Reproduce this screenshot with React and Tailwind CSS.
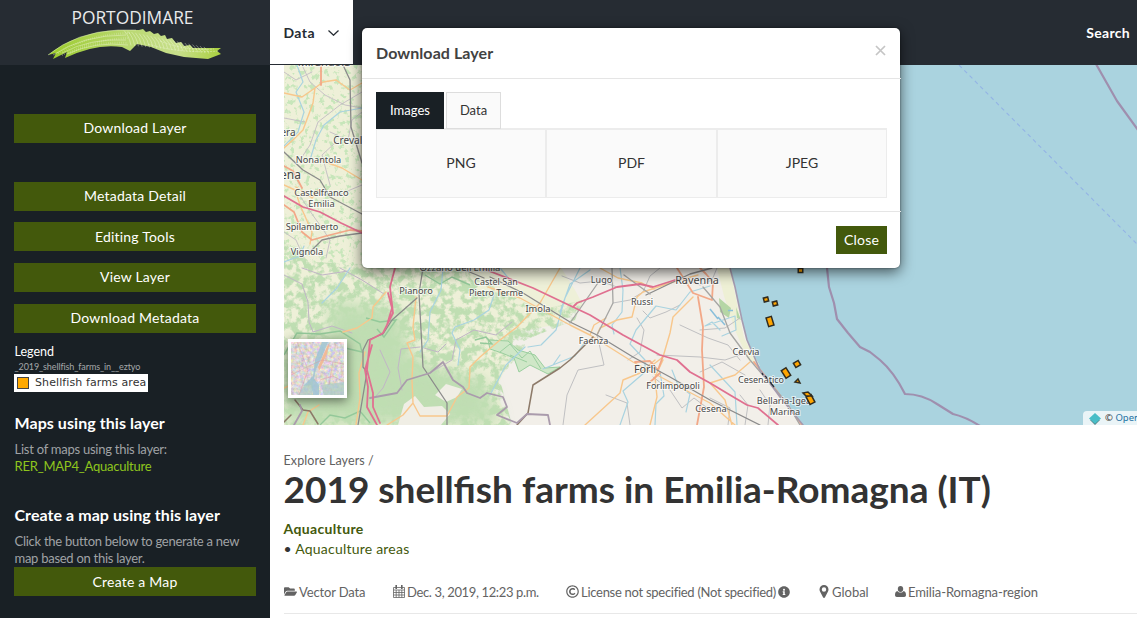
import React from "react";
import { FaFolderOpen, FaRegCopyright, FaInfoCircle, FaUser } from "react-icons/fa";

const roads = [
  // minor roads and administrative lines
  ["#c3bcc4", 0.9, "M302 65L310 82L325 95L345 105L362 108M284 118L305 122M362 92L340 105L318 122L310 145L300 160M284 72L296 80L312 72M330 132L348 140L352 120L362 112M336 142L322 155L326 170L330 185M284 232L296 240L304 258M362 185L350 190L338 196L318 194M300 196L312 214L322 228L330 240L326 258"],
  ["#c1b6c6", 1, "M284 275L302 284L308 302L309 322L313 332L332 326L352 333M340 268L362 280L384 294M302 268L322 275L348 271M420 347L401 349L398 368L402 390M380 350L390 372L383 388L376 396M424 348L438 352L446 344M430 373L452 360L456 340L474 330L496 335L512 322"],
  ["#c0c0c2", 1, "M617 287L600 281L580 283L562 276M613 303L630 300L643 292M660 268L650 276L643 292M643 311L650 318L666 312L680 305M637 318L644 330L640 352L628 360M657 355L700 357L725 360L748 352M597 335L604 365L578 370L567 395L563 425M653 377L670 390L682 408L694 398L710 410M606 395L627 403L630 425M700 330L725 328L740 318M680 325L708 338L728 345L740 360M700 372L722 362L745 375M717 268L712 280L700 285L680 278M710 398L730 408L728 425M740 395L748 405L745 425M760 390L770 405L768 425"],
  // rivers
  ["#a9d3e0", 1.2, "M297 65L303 82L296 92L304 112L298 132L284 146M362 108L340 112L324 125L316 140L310 160M284 262L300 256L304 246M350 268L337 288L322 303M443 268L441 290L430 312L428 340L420 352M494 295L489 310L474 320L455 327L452 333L460 350L458 365M580 268L565 298L556 330L541 345L528 347M490 395L506 365L525 347M510 280L500 268M560 355L553 365L543 369L575 356L585 342M620 268L623 290L622 312L612 325L614 334M710 286L690 292L676 310L656 306L636 330L630 344L645 360L645 372L623 391L628 402L620 425M660 372L664 396L656 404L655 425M720 330L712 322L705 326L735 316L736 330L722 336M672 370L678 385L690 394L686 412M710 365L735 392L737 425M590 270L570 284L560 312"],
  // secondary roads
  ["#f8c78c", 1.4, "M284 93L302 97L315 88L323 82L336 80L350 90L362 83M315 88L313 103L303 130L293 140L284 148M320 160L342 168L362 180M284 185L295 190L300 205L312 232L310 244M296 187L312 198L318 190"],
  ["#f8c78c", 1.4, "M416 297L413 327L415 340L407 343L413 357L412 380L413 403L403 415L387 425M413 403L420 416L447 416L457 397L469 388L470 367L480 357L500 340L517 327L540 303L560 268M386 292L373 307L372 318L357 328L343 332M365 352L359 373L360 398L356 425M488 287L520 298L570 325L590 335L633 362L670 382L710 403L735 425M597 335L600 328L617 320L632 317L637 297L643 292L673 282L698 275M590 335L594 325L606 318M693 297L673 317L670 333L663 357L650 367M585 425L620 393L623 380L640 373L655 360M650 425L657 397L655 377L663 360M600 268L618 278L642 283L655 290M710 383L735 375L750 362M710 383L725 400L732 425M284 388L295 383M303 425L308 412L319 405"],
  ["#f2a888", 1.8, "M321 65L321 85M284 166L293 171L302 188M284 205L294 212L302 232L312 240L326 236L350 230L362 231M677 268L693 293L712 300M698 297L703 327L702 350L704 387L697 425M635 362L650 361L658 370L663 356M660 373L648 384M700 268L706 274L713 282L712 300M754 362L776 390L802 425"],
  // railways
  ["#8b8b8b", 1.3, "M343 65L350 80L351 127L362 163M284 152L303 170L320 180L330 197L362 214M362 233L340 236L322 240L311 251M423 268L419 293L423 367L447 403L447 425M417 298L392 320L383 334L368 340L363 350L363 367L367 372L358 425M490 277L523 293L570 322L597 335L633 357L670 377L710 400L760 425M646 295L690 274L712 268M460 268L484 278"],
  ["#a5a5a3", 1.3, "M600 280L570 323M612 268L613 303L597 335M650 294L624 275M703 287L720 307L730 333L750 360L767 380L787 403L800 425"],
  ["#8d7a69", 1.5, "M593 337L570 360L560 368L533 385L528 413L517 425M295 400L303 410L310 411L318 424M284 422L291 415"],
  // provincial border
  ["#aa9bac", 1.8, "M370 398L397 393L407 380L430 373L443 362L453 380L463 387L467 393L480 398L487 393L503 397L507 407L497 415L517 423L527 414L548 415L550 425M300 405L302 411L294 425"],
  // motorways
  ["#e07090", 1.8, "M284 196L303 207L320 212L341 223L362 233M395 268L390 287L393 313L383 333L370 340L367 370L373 393L373 407L380 423M388 293L392 308L387 325M372 345L365 370L368 387L367 407L377 425M484 269L533 288L573 307L590 315L623 335L660 355L677 360L690 372L710 383L730 395L747 405L758 408L778 425M573 307L577 303L593 297L617 287L640 284L653 287L675 280"],
];

const towns = [
  ["Mirandola", 324, 66, 11], ["era", 288, 135.5, 10], ["Crevalcore", 358, 143.5, 10],
  ["Nonantola", 318.5, 163, 9.2], ["ena", 290.5, 178.5, 12], ["Castelfranco", 321.5, 195.5, 9.3],
  ["Emilia", 321.5, 206.5, 9.3], ["Spilamberto", 312, 229.5, 9.2], ["Vignola", 307, 255, 9.2],
  ["Ozzano dell'Emilia", 460, 271, 9.5], ["Pianoro", 416, 294, 9.2], ["Castel San", 496, 284.5, 9],
  ["Pietro Terme", 496, 296, 9], ["Imola", 538, 312, 9.3], ["Lugo", 601.5, 282.5, 9],
  ["Russi", 642, 304.5, 9], ["Ravenna", 697, 283.5, 10.8], ["Faenza", 593.5, 343.5, 9],
  ["Forlì", 645, 372.5, 10.8], ["Forlimpopoli", 673, 388.5, 9], ["Cesena", 711, 411.5, 9.2],
  ["Cervia", 746, 355, 9.2], ["Cesenatico", 761, 382.5, 9], ["Bellaria-Igea", 784, 403.5, 9.2],
  ["Marina", 785, 414.5, 9.2],
];

const farms = [
  [800.5, 270.5, 4.5, 4, 0], [766, 299.5, 4.5, 4, -15], [775, 303.5, 4.5, 4, -15], [770, 321.5, 5.5, 9, -17],
  [797, 364, 5.5, 5, -30], [786, 373, 5.5, 9, -32], [810.5, 399.5, 5.5, 8.5, -28],
];

function CoastMap() {
  return (
    <svg className="block h-[360px] w-[853px]" viewBox="284 65 853 360">
      <defs>
        <filter id="woods" x="0" y="0" width="100%" height="100%" colorInterpolationFilters="sRGB">
          <feTurbulence type="fractalNoise" baseFrequency="0.13" numOctaves="4" seed="8" />
          <feColorMatrix values="0 0 0 0 .75  0 0 0 0 .87  0 0 0 0 .7  5 0 0 0 -2" />
          <feComposite in2="SourceGraphic" operator="in" />
        </filter>
        <filter id="scrub" x="0" y="0" width="100%" height="100%" colorInterpolationFilters="sRGB">
          <feTurbulence type="fractalNoise" baseFrequency="0.2" numOctaves="3" seed="3" />
          <feColorMatrix values="0 0 0 0 .78  0 0 0 0 .9  0 0 0 0 .73  7 0 0 0 -3.8" />
          <feComposite in2="SourceGraphic" operator="in" />
        </filter>
        <filter id="soft"><feGaussianBlur stdDeviation="8" /></filter>
      </defs>
      <rect x="284" y="65" width="853" height="360" fill="#aad3df" />
      <path d="M284 65H700L730 265L735 287L742 320L747 340L760 370L780 397L803 425H284Z" fill="#f2efe9" />
      <path d="M284 65H480V268L560 266L575 290L583 305L555 325L515 332L505 370L495 390L510 425H284Z" fill="#eef0d8" />
      <path d="M284 65H370V268H284Z" fill="#000" filter="url(#scrub)" />
      <path d="M284 350L360 320L430 365L485 380L500 425H284ZM330 300L400 310L410 350L330 360Z" fill="#bcdcb0" opacity=".9" filter="url(#soft)" />
      <path d="M284 240L310 262L460 268L500 290L540 310L583 300L575 320L530 338L500 380L512 425H284Z" fill="#000" filter="url(#woods)" />
      <path d="M404 404L415 396L424 407L442 406L450 414L441 425H398ZM446 384L462 389L457 397L446 402L435 395Z" fill="#f0eee5" />
      <path d="M488 340L508 341L518 350L535 355L545 368L560 367L548 374L530 365L519 372L514 358L502 353L490 349Z" fill="#cfe7c7" stroke="#9bcf9f" />
      <path d="M500 352L510 344L522 358L530 351L541 369M510 355L527 362" fill="none" stroke="#9bcf9f" />
      <path d="M284 355L297 333L320 334L340 331L360 344L362 352L345 348M366 318L380 322L396 320L384 337L377 329M320 425L330 415L345 418L360 411L370 423M475 340L486 337L492 344L480 343M425 275L440 284L452 277L470 285" fill="none" stroke="#94c99a" strokeWidth="1.4" />
      <path d="M717 268H730L744 338L760 366L748 360L735 330L724 296Z" fill="#eef0d5" />
      <path d="M719 298L731 308L729 318L720 312ZM736 307L741 320L737 318Z" fill="#b5d6a5" />
      <path d="M728 310.500h5M710 309l8 10M718 317l7 8" stroke="#8abfdb" strokeWidth="1.5" />
      <g fill="none" strokeLinejoin="round" strokeLinecap="round">
        {roads.map(([color, width, d]) => <path key={d} d={d} stroke={color} strokeWidth={width} />)}
        <path d="M730 268L735 287L742 320L747 340L760 370L780 397L803 425" stroke="#a59cb0" strokeWidth="1.6" />
        <path d="M827 268L829 287L834 303L837 319L848 333L860 347L870 352L880 360Q894 372 905 394Q922 394 937 404L953 414Q966 417 980 426M1096 64L1117 101L1138 130" stroke="#9f8fae" strokeWidth="2.2" />
        <path d="M959 65L1137 244" stroke="#93b3e5" strokeWidth="1.1" strokeDasharray="4 3.500" strokeLinecap="butt" />
      </g>
      <g fontFamily="Noto Sans, sans-serif" textAnchor="middle" fill="#484848" stroke="#fff" strokeOpacity=".65" strokeWidth="2" paintOrder="stroke">
        {towns.map(([name, x, y, size]) => <text key={name} x={x} y={y} fontSize={size}>{name}</text>)}
      </g>
      <g fill="#ffa500" stroke="#302c20" strokeWidth="1.5">
        {farms.map(([x, y, w, h, a]) => (
          <rect key={x} x={x - w / 2} y={y - h / 2} width={w} height={h} transform={`rotate(${a} ${x} ${y})`} />
        ))}
        <path d="M795 382L798 379L800 383ZM803 393L808 392L812 396L806 396Z" />
      </g>
      <path d="M762 373l1 2M765 376l2 2M770 382l4 5" stroke="#29303a" strokeWidth="1.4" />
    </svg>
  );
}

function Logo() {
  const fan = Array.from({ length: 22 }, (_, i) => i);
  return (
    <svg className="block h-[65px] w-[270px]" viewBox="0 0 270 65">
      <defs>
        <linearGradient id="wave"><stop offset="0" stopColor="#9bcb2b" /><stop offset=".45" stopColor="#b9d870" /><stop offset=".75" stopColor="#c8df8c" /><stop offset="1" stopColor="#a9d03f" /></linearGradient>
      </defs>
      <text x="71.500" y="23.500" textLength="122" lengthAdjust="spacingAndGlyphs" fontFamily="Open Sans, sans-serif" fontSize="18.500" fill="#e9eaeb">PORTODIMARE</text>
      <path d="M48 55Q76 32 118 30L139 30L143 29L146 32L150 31L154 34L158 33L161 36L165 35L167 39L172 38L176 43L181 42L184 46L190 45L193 48L221 48L217 51L221 54L208 59L184 57L166 53L151 47L137 44L130 51L122 47Q96 43 65 58L67 52L53 59L56 53Z" fill="url(#wave)" />
      <g fill="none" stroke="#f1f8dc" strokeOpacity=".7" strokeWidth=".6">
        <path d="M48 55Q76 32 118 30L136 30M53 55Q83 35 126 35M62 53Q90 38 126 40M67 54Q95 41 128 45" />
        {fan.map((i) => <path key={i} d={`M${124 + i * 3.8} ${30.500 + i * 0.78}q5 5 ${7 - i * 0.1} ${15 - i * 0.4}`} />)}
        <path d="M148 44Q180 54 219 51M160 41Q185 51 214 49" strokeDasharray="2 1" />
      </g>
      <path d="M58 53Q90 34 130 33M62 55Q90 40 128 38M70 53Q95 41 128 43" fill="none" stroke="#eef6d5" strokeOpacity=".45" strokeWidth="2" strokeDasharray=".6 1.600" />
    </svg>
  );
}

function SideButton({ children, leading = "leading-[27px]", className = "" }) {
  return <button className={`block h-[29px] w-[242px] shrink-0 bg-[#43590c] text-center text-[14px] tracking-[0.2px] text-white ${className}`}><span className={`block h-[29px] ${leading}`}>{children}</span></button>;
}

function CalendarGlyph() {
  return (
    <svg className="h-[13px] w-[12px]" viewBox="0 0 12 13" fill="none" stroke="#636363">
      <path d="M.5 2.500h11v10H.5zM.5 5h11M.5 7.500h11M.5 10h11M3.200 5v7.500M6 5v7.500M8.800 5v7.500" strokeWidth=".8" />
      <path d="M3.200 0v4M8.800 0v4" strokeWidth="1.600" />
    </svg>
  );
}

function PinGlyph() {
  return (
    <svg className="h-[13px] w-[10px]" viewBox="0 0 10 13" fill="#636363">
      <path fillRule="evenodd" d="M5 0a4.500 4.500 0 0 1 4.500 4.500c0 .8-.2 1.400-.5 2L6 12.300c-.4.800-1.600.800-2 0L1 6.500c-.3-.6-.5-1.200-.5-2A4.500 4.500 0 0 1 5 0Zm0 2.300a2.200 2.200 0 1 0 0 4.400a2.200 2.200 0 1 0 0-4.400Z" />
    </svg>
  );
}

function PersonGlyph() {
  return (
    <svg className="h-[11px] w-[11px]" viewBox="0 0 11 11" fill="#636363">
      <ellipse cx="5.500" cy="3" rx="2.700" ry="3" />
      <path d="M2.400 5C.8 5.200 0 6.800 0 9c0 1.200.7 2 1.800 2h7.400C10.300 11 11 10.200 11 9c0-2.200-.8-3.800-2.400-4C7.300 7 3.700 7 2.400 5Z" />
    </svg>
  );
}

function Sidebar() {
  return (
    <aside className="flex h-[618px] w-[270px] shrink-0 flex-col bg-[#192025] text-white">
      <div className="h-[65px] shrink-0 bg-[#262c33]"><Logo /></div>
      <div className="flex flex-col pl-[14px]">
        <SideButton className="mt-[49px]">Download Layer</SideButton>
        <SideButton className="mt-[39px]">Metadata Detail</SideButton>
        <SideButton className="mt-[11px]" leading="leading-[29px]">Editing Tools</SideButton>
        <SideButton className="mt-3">View Layer</SideButton>
        <SideButton className="mt-3">Download Metadata</SideButton>
        <div className="mt-[10px] h-[18px] pl-[0.5px] text-[12.5px] leading-[18px]">Legend</div>
        <div className="h-[13px] pl-[0.5px] text-[9px] leading-[12px] tracking-[-0.1px] text-[#a5a8aa]">_2019_shellfish_farms_in__eztyo</div>
        <div className="flex h-[18px] w-[134px] items-center bg-white pl-[3px] font-['DejaVu_Sans',sans-serif] text-[11px] text-[#333]">
          <span className="mr-1.5 h-3 w-3 shrink-0 border border-[#444] bg-[#ffa900]" />
          <span className="whitespace-nowrap tracking-[0.1px]">Shellfish farms area</span>
        </div>
        <h2 className="mt-[20px] pl-[0.5px] text-[16px] font-bold leading-[22px] tracking-[0.06px]">Maps using this layer</h2>
        <p className="mt-[7px] pl-[0.5px] text-[13px] leading-[17px] tracking-[-0.25px] text-[#a0a3a5]">List of maps using this layer:</p>
        <p className="pl-[0.5px] text-[13px] leading-[17px] tracking-[-0.22px] text-[#8ec51d]">RER_MAP4_Aquaculture</p>
        <h2 className="mt-[29px] pl-[0.5px] text-[16px] font-bold leading-[22px] tracking-[0.06px]">Create a map using this layer</h2>
        <p className="mt-[7px] pl-[0.5px] text-[13px] leading-[17px] tracking-[-0.27px] text-[#a0a3a5]">Click the button below to generate a new<br />map based on this layer.</p>
        <SideButton leading="leading-[29px]">Create a Map</SideButton>
      </div>
    </aside>
  );
}

function DownloadDialog() {
  return (
    <section className="absolute left-[362px] top-[28px] h-[240px] w-[538px] rounded-[5px] bg-white text-[#333] shadow-[0_4px_14px_rgba(0,0,0,0.6),0_0_2px_rgba(0,0,0,0.5)]">
      <header className="flex h-[51px] w-[539px] justify-between border-b border-[#e5e5e5] px-[14px]">
        <h3 className="pt-[14px] text-[16px] font-bold leading-[22px] tracking-[0.08px] text-[#424242]">Download Layer</h3>
        <svg className="mt-[17px] h-[11px] w-[12px]" viewBox="0 0 12 11" stroke="#c5c5c5" strokeWidth="1.700"><path d="M1 1l9 9M10 1l-9 9" /></svg>
      </header>
      <div className="h-[132px] px-[14px] pt-[13px]">
        <div className="flex h-[36px] gap-[2px]">
          <span className="h-[37px] w-[68px] bg-[#192025] text-center text-[13px] leading-[36px] text-white">Images</span>
          <span className="h-[37px] w-[55px] border border-[#ddd] bg-[#fafafa] text-center text-[13px] leading-[34px]">Data</span>
        </div>
        <div className="grid h-[70px] w-[511px] grid-cols-[170px_171px_168px] divide-x-2 divide-[#ececec] border border-t-2 border-[#ececec] bg-[#fafafa] text-center text-[14px] leading-[66px]">
          <span>PNG</span><span>PDF</span><span>JPEG</span>
        </div>
      </div>
      <footer className="flex h-[57px] w-[539px] justify-end border-t border-[#e5e5e5] pr-[14px] pt-[14px]">
        <button className="h-7 w-[51px] bg-[#43590c] text-[14px] leading-7 tracking-[0.2px] text-white">Close</button>
      </footer>
    </section>
  );
}

export default function App() {
  return (
    <div className="relative flex h-[618px] w-[1137px] overflow-hidden bg-white font-['Lato',sans-serif] text-[#333]">
      <Sidebar />
      <div className="flex w-[867px] flex-col">
        <nav className="flex h-[65px] shrink-0 justify-between bg-[#262c33] text-[14px] font-bold">
          <div className="flex h-16 w-[83px] items-center bg-white pl-[13.5px] pt-px text-[#262c33]">
            <span className="tracking-[0.4px]">Data</span>
            <svg className="ml-[13px] h-[6px] w-[11px]" viewBox="0 0 11 6" fill="none" stroke="#262c33" strokeWidth="1.300"><path d="M.5.5l5 4.700l5-4.700" /></svg>
          </div>
          <span className="pr-[7px] pt-[23px] leading-5 tracking-[0.3px] text-white">Search</span>
        </nav>
        <main className="pl-[14px]">
          <div className="relative h-[360px] w-[853px] overflow-hidden">
            <CoastMap />
            <div className="absolute left-1 top-[274px] h-[59px] w-[59px] border-[3px] border-white bg-[#e9e2dc] shadow-[0_3px_10px_rgba(0,0,0,0.5)]">
              <svg className="block h-[53px] w-[53px]" viewBox="0 0 53 53">
                <defs>
                  <filter id="city" x="0" y="0" width="100%" height="100%" colorInterpolationFilters="sRGB">
                    <feTurbulence type="fractalNoise" baseFrequency=".3" numOctaves="4" seed="5" />
                    <feColorMatrix values=".4 0 0 0 .66  .1 .35 0 0 .61  0 0 .45 0 .61  0 0 0 0 1" />
                  </filter>
                </defs>
                <rect width="53" height="53" filter="url(#city)" />
                <path d="M37 0L31 15L25 27L23 37L28 43L28 53H22L20 43L12 44L22 34L24 18L31 0Z" fill="#9fc4d4" opacity=".85" />
                <path d="M39 0L36 12L28 29L27 25L35 7Z" fill="#f0ba96" />
                <path d="M12 45L22 38L21 53H7ZM30 43L53 40V53H33Z" fill="#a9cbc4" opacity=".7" />
                <path d="M0 33L18 24L31 18L53 22M29 38L42 34L53 40M6 0L17 28L8 53M42 20L38 43" fill="none" stroke="#d69ca5" strokeWidth=".5" />
              </svg>
            </div>
            <div className="absolute bottom-0 right-0 flex h-[14px] w-[54px] items-center overflow-hidden rounded-tl-sm bg-white/75 pl-[6px] pt-px font-['Noto_Sans',sans-serif] text-[9.5px]">
              <svg className="mr-1 h-3 w-3 shrink-0" viewBox="0 0 12 12"><path d="M1 7l5 5 5-5" fill="#52767a" /><path d="M6 0l6 5.500L6 11 0 5.500Z" fill="#49bdc7" /></svg>
              <span className="whitespace-nowrap">© <span className="text-[#2471a3]">OpenStreetMap</span></span>
            </div>
          </div>
          <div className="mt-[26px] h-[18px] -ml-[0.5px] text-[12.5px] leading-[20px] tracking-[0.1px] text-[#606060]">Explore Layers /</div>
          <h1 className="-mt-px -ml-[0.5px] h-[43px] whitespace-nowrap text-[37px] font-bold leading-[42px]">2019 shellfish farms in Emilia-Romagna (IT)</h1>
          <div className="mt-[8px] -ml-[0.5px] text-[14px] font-bold leading-5 tracking-[0.35px] text-[#43590c]">Aquaculture</div>
          <div className="-ml-[0.5px] text-[14px] leading-5 tracking-[0.22px]">• <span className="text-[#43590c]">Aquaculture areas</span></div>
          <div className="mt-[20px] flex h-[35px] border-b border-[#e8e8e8] text-[13px] leading-[24px] text-[#636363]">
            <span className="flex w-[109px] items-center gap-[2px] whitespace-nowrap pb-[9px] tracking-[-0.14px]"><FaFolderOpen size={13} />Vector Data</span>
            <span className="flex w-[173px] items-center gap-[2px] whitespace-nowrap pb-[9px] tracking-[-0.36px]"><CalendarGlyph />Dec. 3, 2019, 12:23 p.m.</span>
            <span className="flex w-[253px] items-center gap-[2px] whitespace-nowrap pb-[9px] tracking-[-0.28px]"><FaRegCopyright size={13} />License not specified (Not specified) <FaInfoCircle size={12} /></span>
            <span className="flex w-[76px] items-center gap-[3px] whitespace-nowrap pb-[9px]"><PinGlyph />Global</span>
            <span className="flex items-center gap-[2px] whitespace-nowrap pb-[9px] tracking-[-0.1px]"><PersonGlyph />Emilia-Romagna-region</span>
          </div>
        </main>
      </div>
      <DownloadDialog />
    </div>
  );
}
